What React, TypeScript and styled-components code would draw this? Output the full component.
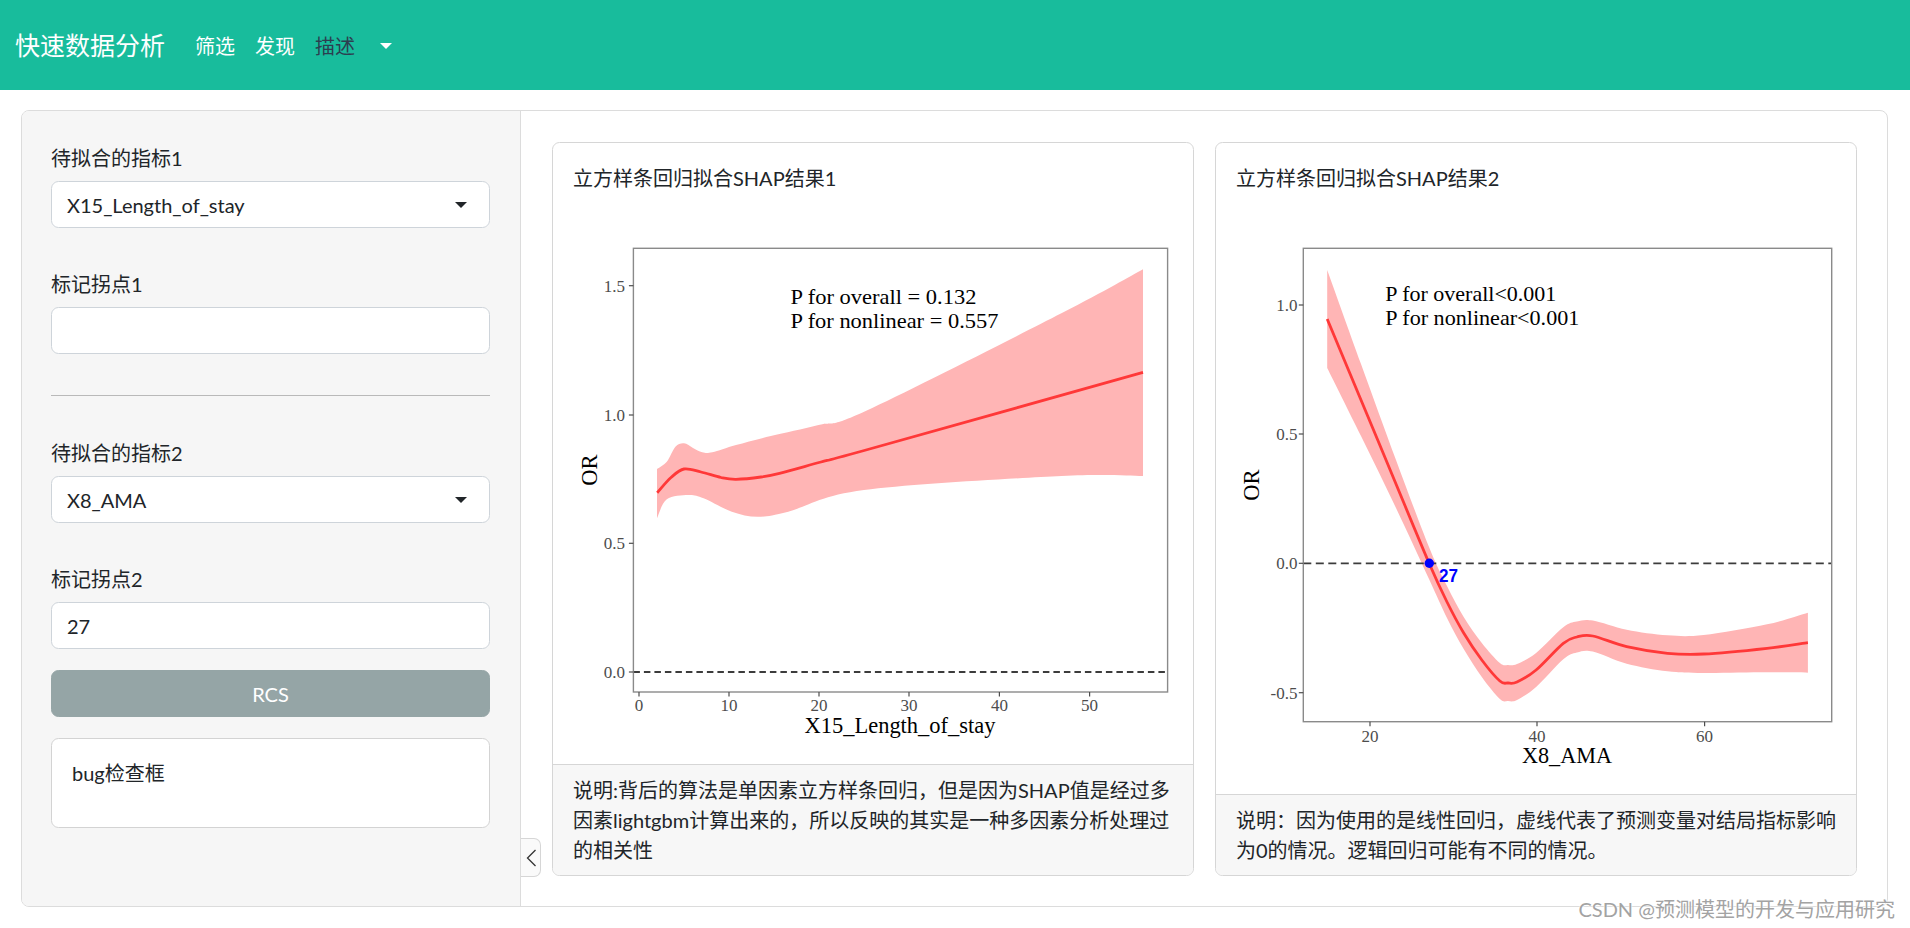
import React from 'react';
import styled, { createGlobalStyle } from 'styled-components';

type Pt = [number, number];

// catmull-rom through the points, as cubic beziers
const smooth = (pts: Pt[], move = true): string => {
  let d = `${move ? 'M' : 'L'}${pts[0][0]},${pts[0][1]}`;
  for (let i = 0; i < pts.length - 1; i++) {
    const p0 = pts[i - 1] || pts[i];
    const p1 = pts[i];
    const p2 = pts[i + 1];
    const p3 = pts[i + 2] || p2;
    const c1x = p1[0] + (p2[0] - p0[0]) / 6;
    const c1y = p1[1] + (p2[1] - p0[1]) / 6;
    const c2x = p2[0] - (p3[0] - p1[0]) / 6;
    const c2y = p2[1] - (p3[1] - p1[1]) / 6;
    d += ` C${c1x.toFixed(1)},${c1y.toFixed(1)} ${c2x.toFixed(1)},${c2y.toFixed(1)} ${p2[0]},${p2[1]}`;
  }
  return d;
};

const ribbon = (upper: Pt[], lower: Pt[]): string => `${smooth(upper)} ${smooth([...lower].reverse(), false)} Z`;

interface Label {
  text: string;
  x: number;
  y: number;
  w?: number;
}

interface PlotSpec {
  origin: Pt;
  size: Pt;
  panel: { x0: number; y0: number; x1: number; y1: number };
  yTicks: { label: string; y: number }[];
  yLabelX: number;
  xTicks: { label: string; x: number }[];
  xLabelY: number;
  xTitle: Label;
  yTitle: { x: number; y: number };
  notes: Label[];
  zeroY: number;
  dash: string;
  band: string;
  line: string;
  marker?: { x: number; y: number; label: Label };
}

// ---- plot 1: X15_Length_of_stay
const line1: Pt[] = [
  [656.2, 492.7], [670, 477.5], [683, 469], [700, 472], [720, 477.5], [735, 479.3],
  [760, 477], [778.5, 473.3], [820, 462], [865, 450], [1142, 372.3],
];
const upper1: Pt[] = [
  [656, 469], [665.8, 461.7], [674.4, 446.7], [683, 443.3], [692, 448], [701.3, 452.3],
  [711.3, 452.3], [735, 445], [769.8, 436], [817.5, 425], [865.2, 410.7], [1060.4, 313.3], [1142, 269.3],
];
const lower1: Pt[] = [
  [656, 518.3], [665.8, 499.3], [687.4, 495], [702.6, 498.3], [730.8, 511.7], [756.8, 516.7],
  [787.2, 511.7], [863, 490], [1060.4, 476], [1142, 476],
];

// ---- plot 2: X8_AMA (line with half width of the ribbon)
const line2: [number, number, number][] = [
  [1326.2, 319, 49], [1360, 400, 36], [1395, 484, 24], [1428, 563, 16], [1446, 602, 16],
  [1462.7, 633, 16], [1480.8, 660, 17], [1498.9, 681, 18], [1507, 683, 18], [1516, 682, 18],
  [1535.1, 670, 17], [1562.3, 643.3, 16], [1575.9, 637, 15.5], [1591.8, 636, 15.5],
  [1625.7, 646.7, 17], [1666.5, 653.3, 18], [1702.7, 654, 19], [1766.1, 648.3, 24], [1806.9, 642.7, 30],
];

const plots: PlotSpec[] = [
  {
    origin: [572, 200],
    size: [602, 546],
    panel: { x0: 632.4, y0: 248.3, x1: 1166.6, y1: 692 },
    yTicks: [
      { label: '0.0', y: 672 },
      { label: '0.5', y: 543.3 },
      { label: '1.0', y: 415 },
      { label: '1.5', y: 285.7 },
    ],
    yLabelX: 624,
    xTicks: [
      { label: '0', x: 638 },
      { label: '10', x: 728 },
      { label: '20', x: 818 },
      { label: '30', x: 908 },
      { label: '40', x: 998.4 },
      { label: '50', x: 1088.6 },
    ],
    xLabelY: 711,
    xTitle: { text: 'X15_Length_of_stay', x: 899, y: 733, w: 191 },
    yTitle: { x: 595.5, y: 470 },
    notes: [
      { text: 'P for overall = 0.132', x: 789.4, y: 304, w: 186 },
      { text: 'P for nonlinear = 0.557', x: 789.4, y: 328, w: 208 },
    ],
    zeroY: 672,
    dash: '6.5 4',
    band: ribbon(upper1, lower1),
    line: smooth(line1),
  },
  {
    origin: [1235, 200],
    size: [603, 575],
    panel: { x0: 1302.3, y0: 248.3, x1: 1830.7, y1: 721.7 },
    yTicks: [
      { label: '-0.5', y: 692.7 },
      { label: '0.0', y: 563.3 },
      { label: '0.5', y: 434 },
      { label: '1.0', y: 305 },
    ],
    yLabelX: 1296.5,
    xTicks: [
      { label: '20', x: 1369 },
      { label: '40', x: 1536 },
      { label: '60', x: 1703.6 },
    ],
    xLabelY: 742,
    xTitle: { text: 'X8_AMA', x: 1566, y: 763, w: 90 },
    yTitle: { x: 1258, y: 485 },
    notes: [
      { text: 'P for overall<0.001', x: 1384.3, y: 300.5, w: 171 },
      { text: 'P for nonlinear<0.001', x: 1384.3, y: 324.5, w: 194 },
    ],
    zeroY: 563.3,
    dash: '8 4.5',
    band: ribbon(
      line2.map(([x, y, h]) => [x, y - h] as Pt),
      line2.map(([x, y, h]) => [x, y + h] as Pt),
    ),
    line: smooth(line2.map(([x, y]) => [x, y] as Pt)),
    marker: { x: 1428.3, y: 563.3, label: { text: '27', x: 1438, y: 582, w: 19 } },
  },
];

const cards = [
  {
    title: '立方样条回归拟合SHAP结果1',
    note: '说明:背后的算法是单因素立方样条回归，但是因为SHAP值是经过多因素lightgbm计算出来的，所以反映的其实是一种多因素分析处理过的相关性',
  },
  {
    title: '立方样条回归拟合SHAP结果2',
    note: '说明：因为使用的是线性回归，虚线代表了预测变量对结局指标影响为0的情况。逻辑回归可能有不同的情况。',
  },
];

const RcsPlot = ({ spec }: { spec: PlotSpec }): JSX.Element => {
  const { panel } = spec;
  return (
    <PlotSvg
      width={spec.size[0]}
      height={spec.size[1]}
      viewBox={`${spec.origin[0]} ${spec.origin[1]} ${spec.size[0]} ${spec.size[1]}`}
    >
      <path d={spec.band} fill="#ffb5b5" />
      <path d={spec.line} fill="none" stroke="#ff3838" strokeWidth={2.8} />
      <line
        x1={panel.x0}
        x2={panel.x1}
        y1={spec.zeroY}
        y2={spec.zeroY}
        stroke="#3c3c3c"
        strokeWidth={1.8}
        strokeDasharray={spec.dash}
      />
      <rect
        x={panel.x0}
        y={panel.y0}
        width={panel.x1 - panel.x0}
        height={panel.y1 - panel.y0}
        fill="none"
        stroke="#8a8a8a"
        strokeWidth={1.4}
      />
      {spec.yTicks.map((t) => (
        <g key={t.label}>
          <line x1={panel.x0 - 4.5} x2={panel.x0} y1={t.y} y2={t.y} stroke="#4d4d4d" strokeWidth={1.2} />
          <text className="tick" x={spec.yLabelX} y={t.y + 6} textAnchor="end">
            {t.label}
          </text>
        </g>
      ))}
      {spec.xTicks.map((t) => (
        <g key={t.label}>
          <line x1={t.x} x2={t.x} y1={panel.y1} y2={panel.y1 + 4.5} stroke="#4d4d4d" strokeWidth={1.2} />
          <text className="tick" x={t.x} y={spec.xLabelY} textAnchor="middle">
            {t.label}
          </text>
        </g>
      ))}
      <text
        className="title"
        x={spec.xTitle.x}
        y={spec.xTitle.y}
        textAnchor="middle"
        textLength={spec.xTitle.w}
        lengthAdjust="spacingAndGlyphs"
      >
        {spec.xTitle.text}
      </text>
      <text
        className="title"
        x={spec.yTitle.x}
        y={spec.yTitle.y}
        textAnchor="middle"
        transform={`rotate(-90 ${spec.yTitle.x} ${spec.yTitle.y})`}
      >
        OR
      </text>
      {spec.notes.map((n) => (
        <text key={n.text} className="note" x={n.x} y={n.y} textLength={n.w} lengthAdjust="spacingAndGlyphs">
          {n.text}
        </text>
      ))}
      {spec.marker && (
        <>
          <circle cx={spec.marker.x} cy={spec.marker.y} r={4.7} fill="#0000ff" />
          <text
            className="marker"
            x={spec.marker.label.x}
            y={spec.marker.label.y}
            textLength={spec.marker.label.w}
            lengthAdjust="spacingAndGlyphs"
          >
            {spec.marker.label.text}
          </text>
        </>
      )}
    </PlotSvg>
  );
};

const App = (): JSX.Element => {
  return (
    <>
      <GlobalStyle />
      <Shell>
        <Navbar>
          <Brand>快速数据分析</Brand>
          <NavLink>筛选</NavLink>
          <NavLink>发现</NavLink>
          <NavLink $active>描述</NavLink>
          <DropToggle />
        </Navbar>

        <Page>
          <Layout>
            <Sidebar>
              <Field>
                <FieldLabel>待拟合的指标1</FieldLabel>
                <Select>X15_Length_of_stay</Select>
              </Field>
              <Field>
                <FieldLabel>标记拐点1</FieldLabel>
                <Input defaultValue="" />
              </Field>
              <Rule />
              <Field>
                <FieldLabel>待拟合的指标2</FieldLabel>
                <Select>X8_AMA</Select>
              </Field>
              <Field $tight>
                <FieldLabel>标记拐点2</FieldLabel>
                <Input defaultValue="27" />
              </Field>
              <RunButton>RCS</RunButton>
              <DebugBox>bug检查框</DebugBox>
            </Sidebar>

            <CollapseTab>
              <svg width="11" height="18" viewBox="0 0 11 18">
                <path d="M9.5 1 L1.5 9 L9.5 17" fill="none" stroke="#333" strokeWidth="1.3" />
              </svg>
            </CollapseTab>

            <Main>
              {cards.map((card, index) => (
                <Card key={card.title}>
                  <CardBody>
                    <CardTitle>{card.title}</CardTitle>
                    <PlotWrap>
                      <RcsPlot spec={plots[index]} />
                    </PlotWrap>
                  </CardBody>
                  <CardFooter>{card.note}</CardFooter>
                </Card>
              ))}
            </Main>
          </Layout>
        </Page>

        <Watermark>CSDN @预测模型的开发与应用研究</Watermark>
      </Shell>
    </>
  );
};

const GlobalStyle = createGlobalStyle`
  html, body, #root {
    height: 100%;
    margin: 0;
  }

  * {
    box-sizing: border-box;
  }

  body {
    font-family: Lato, "Noto Sans CJK SC", sans-serif;
    font-size: 20px;
    line-height: 1.5;
    color: #212529;
    background: #fff;
  }
`;

const Shell = styled.div`
  position: relative;
  display: flex;
  flex-direction: column;
  height: 100%;
`;

const Navbar = styled.nav`
  display: flex;
  align-items: center;
  height: 90px;
  padding: 2px 15px 0;
  background-color: #18bc9c;
  flex-shrink: 0;
`;

const Brand = styled.span`
  font-size: 25px;
  color: #fff;
  margin-right: 20px;
  white-space: nowrap;
`;

const NavLink = styled.span<{ $active?: boolean }>`
  padding: 0 10px;
  font-size: 20px;
  color: ${(p) => (p.$active ? '#2c3e50' : '#fff')};
`;

const DropToggle = styled.span`
  padding: 0 10px;
  height: 30px;
  display: flex;
  align-items: center;

  &::after {
    content: '';
    margin-left: 5px;
    border-top: 6px solid #fff;
    border-left: 6px solid transparent;
    border-right: 6px solid transparent;
  }
`;

const Page = styled.div`
  flex: 1;
  min-height: 0;
  padding: 20px 22px 21px 21px;
`;

const Layout = styled.div`
  position: relative;
  display: flex;
  height: 100%;
  border: 1px solid #dcdcdc;
  border-radius: 8px;
  overflow: hidden;
`;

const Sidebar = styled.aside`
  width: 499px;
  flex-shrink: 0;
  padding: 32px 30px 30px 29px;
  background-color: #f6f6f6;
  border-right: 1px solid #dcdcdc;
  display: flex;
  flex-direction: column;
`;

const Field = styled.div<{ $tight?: boolean }>`
  display: flex;
  flex-direction: column;
  margin-bottom: ${(p) => (p.$tight ? '21px' : '41px')};
`;

const FieldLabel = styled.label`
  margin-bottom: 8px;
  line-height: 30px;
`;

const controlBase = `
  height: 47px;
  width: 100%;
  padding: 7.5px 15px;
  font: inherit;
  font-size: 20px;
  line-height: 30px;
  color: #212529;
  background-color: #fff;
  border: 1px solid #ced4da;
  border-radius: 7.5px;
`;

const Select = styled.div`
  ${controlBase}
  position: relative;

  &::after {
    content: '';
    position: absolute;
    right: 22px;
    top: 20px;
    border-top: 6px solid #212529;
    border-left: 6px solid transparent;
    border-right: 6px solid transparent;
  }
`;

const Input = styled.input`
  ${controlBase}
  outline: none;
`;

const Rule = styled.hr`
  margin: 0 0 42px;
  border: 0;
  border-top: 1px solid #b9b9b9;
`;

const RunButton = styled.button`
  height: 47px;
  width: 100%;
  margin-bottom: 21px;
  font: inherit;
  font-size: 20px;
  color: #fff;
  background-color: #95a5a6;
  border: 1px solid #95a5a6;
  border-radius: 7.5px;
`;

const DebugBox = styled.div`
  padding: 19px 20px 39px;
  line-height: 30px;
  background-color: #fff;
  border: 1px solid #d3d3d3;
  border-radius: 7.5px;
`;

const CollapseTab = styled.div`
  position: absolute;
  left: 499px;
  top: 727px;
  width: 20px;
  height: 39px;
  display: flex;
  align-items: center;
  justify-content: center;
  padding-left: 2px;
  background-color: #fafafa;
  border: 1px solid #d6d6d6;
  border-left: 0;
  border-radius: 0 7px 7px 0;
`;

const Main = styled.main`
  flex: 1;
  min-width: 0;
  padding: 31px 30px 30px 31px;
  display: grid;
  grid-template-columns: 1fr 1fr;
  gap: 21px;
`;

const Card = styled.section`
  display: flex;
  flex-direction: column;
  min-height: 0;
  background-color: #fff;
  border: 1px solid #d6d6d6;
  border-radius: 7.5px;
  overflow: hidden;
`;

const CardBody = styled.div`
  flex: 1;
  min-height: 0;
  padding: 20px;
  display: flex;
  flex-direction: column;
`;

const CardTitle = styled.div`
  line-height: 30px;
  margin-bottom: 7px;
`;

const PlotWrap = styled.div`
  flex: 1;
  min-height: 0;
`;

const PlotSvg = styled.svg`
  display: block;
  overflow: visible;

  text {
    font-family: 'Liberation Serif', 'Times New Roman', serif;
  }

  .tick {
    font-size: 17px;
    fill: #4d4d4d;
  }

  .title {
    font-size: 22.5px;
    fill: #000;
  }

  .note {
    font-size: 22px;
    fill: #000;
  }

  .marker {
    font-family: 'Liberation Sans', Arial, sans-serif;
    font-weight: 700;
    font-size: 18px;
    fill: #0000ff;
  }
`;

const CardFooter = styled.div`
  padding: 10px 20px;
  line-height: 30px;
  background-color: #f7f7f7;
  border-top: 1px solid #d6d6d6;
`;

const Watermark = styled.div`
  position: absolute;
  right: 15px;
  top: 894px;
  font-size: 20px;
  line-height: 30px;
  color: #a3a3a3;
  text-shadow: 0 0 2px #fff, 0 0 2px #fff;
  white-space: nowrap;
`;

export default App;
